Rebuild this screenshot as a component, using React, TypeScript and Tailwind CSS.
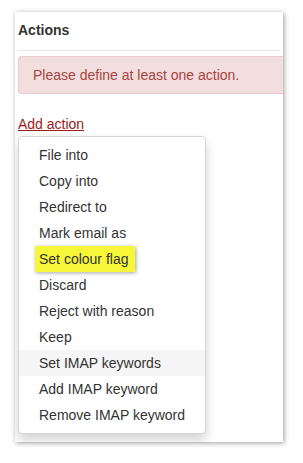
const actions = [
  "File into",
  "Copy into",
  "Redirect to",
  "Mark email as",
  "Set colour flag",
  "Discard",
  "Reject with reason",
  "Keep",
  "Set IMAP keywords",
  "Add IMAP keyword",
  "Remove IMAP keyword",
];

export default function App() {
  return (
    <div className="min-h-[463px] bg-white pl-[15px] pt-[12px] font-['Liberation_Sans',Arial,sans-serif] text-[14px] text-[#333]">
      <div className="h-[430px] w-[268px] overflow-hidden bg-white pl-[3px] pr-[2px] shadow-[1px_1px_5px_rgba(0,0,0,0.4)]">
        <div className="border-b border-[#e5e5e5] pb-[10px] pt-[8px] font-bold leading-5">Actions</div>

        <div className="-mr-[10px] mt-[5px] rounded-[3px] border border-[#ebccd1] bg-[#f2dede] px-[14px] py-2 leading-5 text-[#a94442]">
          Please define at least one action.
        </div>

        <div className="relative mt-[20px]">
          <a href="#" className="leading-5 text-[#9b1c1c] underline">
            Add action
          </a>

          <ul className="mt-px w-[188px] rounded-[4px] border border-[#d4d4d4] bg-white py-[5px] shadow-[0_6px_12px_rgba(0,0,0,0.175)]">
            {actions.map((label) => (
              <li
                key={label}
                className={
                  label === "Set IMAP keywords"
                    ? "whitespace-nowrap bg-[#f5f5f5] px-5 py-[3px] leading-5"
                    : "whitespace-nowrap px-5 py-[3px] leading-5"
                }
              >
                {label === "Set colour flag" ? (
                  <span className="-mx-1 -my-[3px] inline-block bg-[#f7f73a] px-1 py-[3px] pr-[6px] shadow-[1px_1px_4px_rgba(0,0,0,0.35)]">
                    {label}
                  </span>
                ) : (
                  label
                )}
              </li>
            ))}
          </ul>
        </div>
      </div>
    </div>
  );
}
